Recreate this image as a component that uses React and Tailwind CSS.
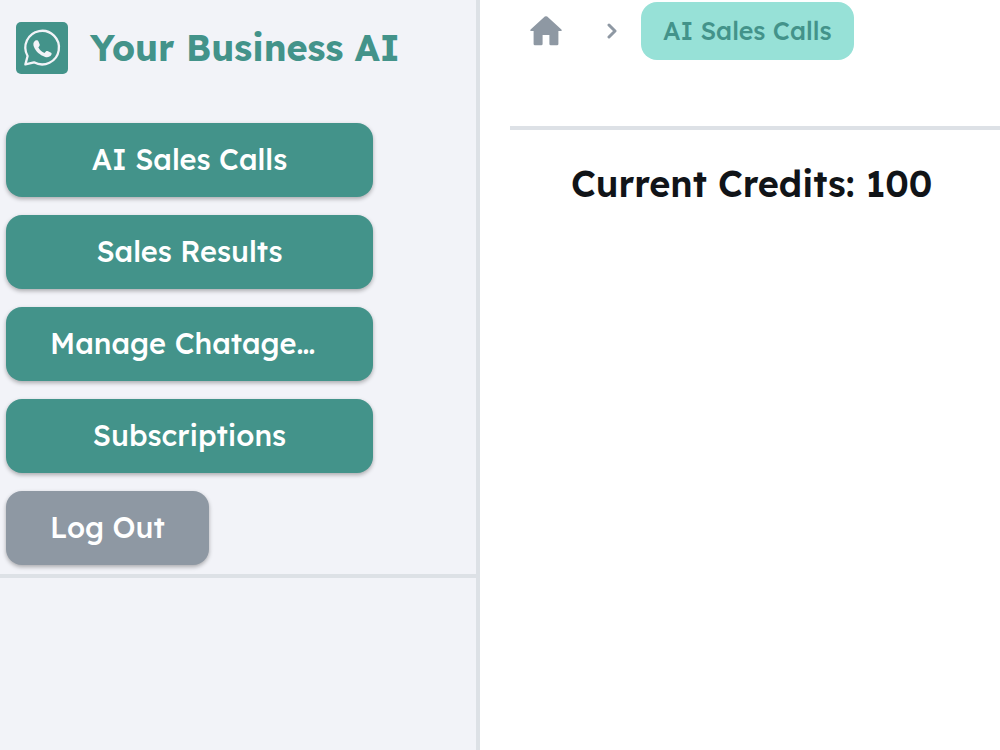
import React from "react";

const menuItems = [
  { label: "AI Sales Calls" },
  { label: "Sales Results" },
  { label: "Manage Chatage…", clipped: true },
  { label: "Subscriptions" },
];

const BrandIcon = () => (
  <svg viewBox="0 0 52 52" className="size-13 shrink-0" aria-hidden="true">
    <rect width="52" height="52" rx="5" fill="#43938a" />
    <path
      d="M9.4 42.4 L11.6 34 A16.8 16.8 0 1 1 18 40.3 Z"
      fill="none"
      stroke="#f2f3f8"
      strokeWidth="2.3"
      strokeLinejoin="round"
    />
    <path
      transform="translate(0.5 0.5)"
      d="M18.6 18.2 C20 17.2 21.6 17.8 22 19 L23.2 22 C23.5 23 22.6 24 21.8 24.8 C23.3 27.6 25.2 29.4 28 30.6 L29.6 28.8 C30 28.4 30.6 28.3 31 28.5 L34.6 30.2 C35.4 30.6 35.2 31.8 34.7 32.6 C33.6 34.4 31 35.2 28.6 34.4 C23 32.6 19.6 29.2 17.5 24.6 C16.4 22.2 16.6 19.6 18.6 18.2 Z"
      fill="#f2f3f8"
    />
  </svg>
);

const HomeIcon = () => (
  <svg viewBox="0 0 32 30" className="h-[30px] w-8" fill="#8e98a3" aria-hidden="true">
    <path d="M14.8 0.6 Q16 -0.3 17.2 0.6 L31.4 13.6 Q32.2 15 30.8 15 H28.4 V28 Q28.4 29.3 27 29.3 H20.8 Q19.4 29.3 19.4 28 V19 H12.6 V28 Q12.6 29.3 11.2 29.3 H5 Q3.6 29.3 3.6 28 V15 H1.2 Q-0.2 15 0.6 13.6 Z" />
  </svg>
);

const ChevronIcon = () => (
  <svg viewBox="0 0 10 16" className="h-4 w-[10px]" aria-hidden="true">
    <path
      d="M2 2 L8 8 L2 14"
      fill="none"
      stroke="#8e98a3"
      strokeWidth="3"
      strokeLinecap="round"
      strokeLinejoin="round"
    />
  </svg>
);

const Sidebar = () => (
  <aside className="w-12/25 border-r-4 border-[#dde1e6] bg-[#f2f3f8]">
    <div className="border-b-4 border-[#dde1e6] pb-[9px]">
      <header className="flex h-24 items-center gap-[22px] px-4">
        <BrandIcon />
        <h1 className="text-4xl font-bold whitespace-nowrap text-[#43938a]">Your Business AI</h1>
      </header>
      <nav className="flex flex-col items-start gap-[18px] px-[6px] pt-[27px] text-[29px] font-medium text-white">
        {menuItems.map((item) => (
          <button
            key={item.label}
            type="button"
            className={`h-[74px] w-full max-w-[367px] rounded-2xl bg-[#43938a] px-11 whitespace-nowrap shadow-[0_2px_4px_rgba(0,0,0,0.3)] ${
              item.clipped ? "text-left" : "text-center"
            }`}
          >
            {item.label}
          </button>
        ))}
        <button
          type="button"
          className="h-[74px] rounded-2xl bg-[#8e98a3] px-11 whitespace-nowrap shadow-[0_2px_4px_rgba(0,0,0,0.3)]"
        >
          Log Out
        </button>
      </nav>
    </div>
  </aside>
);

const App = () => {
  return (
    <div className="flex min-h-screen bg-white font-['Lexend_Deca','Inter',sans-serif]">
      <Sidebar />
      <main className="min-w-0 flex-1 pl-[30px]">
        <nav
          aria-label="Breadcrumb"
          className="flex h-[130px] items-start border-b-4 border-[#dde1e6] pt-[2px] pl-5"
        >
          <div className="flex items-center">
            <a href="#home" aria-label="Home">
              <HomeIcon />
            </a>
            <span className="mr-6 ml-[45px]">
              <ChevronIcon />
            </span>
            <a
              href="#calls"
              className="flex h-[58px] items-center rounded-2xl bg-[#97e1d7] px-[22px] text-[25px] font-medium whitespace-nowrap text-[#43938a]"
            >
              AI Sales Calls
            </a>
          </div>
        </nav>
        <h2 className="px-[61px] pt-[34px] text-4xl font-semibold text-[#111418]">
          Current Credits: 100
        </h2>
      </main>
    </div>
  );
};

export default App;
